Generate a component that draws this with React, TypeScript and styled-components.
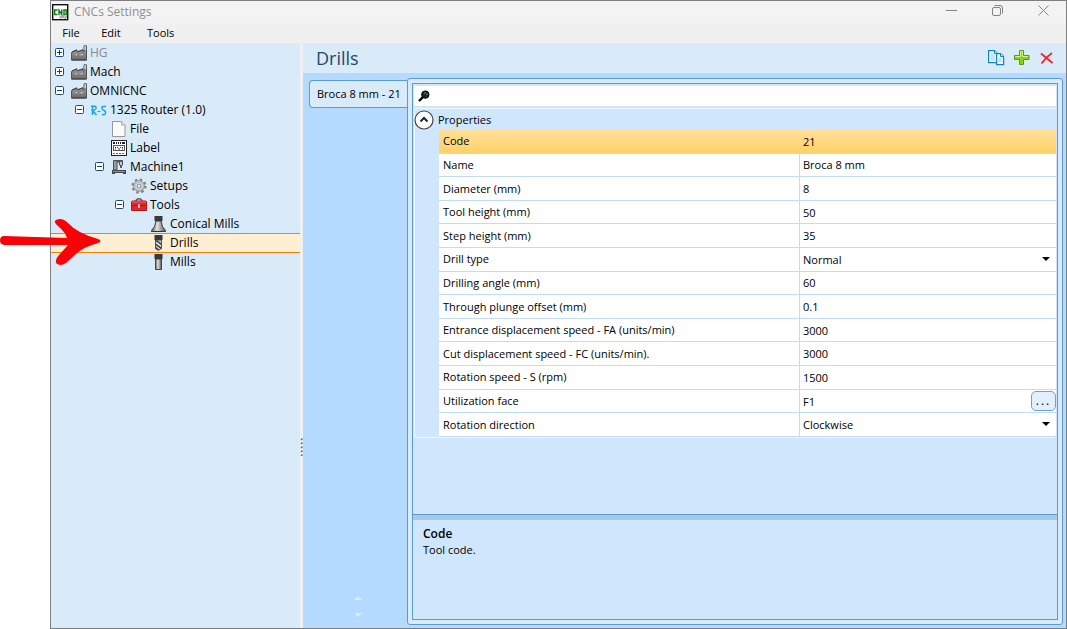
import React, { useState } from "react";
import styled, { createGlobalStyle, css } from "styled-components";

const line = "#5b9bd5";
const panel = "#d9eaf9";
const sheet = "#cfe6fd";
const rule = "#c3dcf5";

const GlobalStyle = createGlobalStyle`
  *, *::before, *::after { box-sizing: border-box; }
  body { margin: 0; background: #fff; }
  body, button, input, select { font-family: "Open Sans", "Noto Sans", sans-serif; }
  button, input, select { color: inherit; }
`;

const Page = styled.div`
  position: relative;
  display: flex;
  min-height: 100vh;
  padding-left: 50px;
  color: #000;
`;

const Window = styled.main`
  flex: 1;
  min-width: 0;
  display: flex;
  flex-direction: column;
  border: 1px solid #7e7e7e;
  background: #f0f0f0;
`;

const TitleBar = styled.header`
  display: flex;
  align-items: center;
  height: 22px;
  padding-left: 1px;
  background: #f3f3f3;
`;

const WindowTitle = styled.h1`
  flex: 1;
  margin: 0 0 0 5px;
  color: #8f8f8f;
  font-size: 12px;
  line-height: 16px;
  font-weight: 400;
`;

const PlainButton = styled.button`
  display: flex;
  align-items: center;
  justify-content: center;
  padding: 0;
  border: 0;
  background: none;
`;

const CaptionButton = styled(PlainButton)`
  align-self: flex-start;
  width: 46px;
  height: 19px;
`;

const MenuBar = styled.nav`
  display: flex;
  height: 20px;
  padding-left: 10px;
  gap: 20px;
`;

const MenuItem = styled(PlainButton)`
  min-width: 20px;
  font-size: 11px;
  line-height: 16px;

  &:last-child {
    margin-left: 6px;
  }
`;

const Body = styled.div`
  flex: 1;
  display: flex;
`;

const Sidebar = styled.aside`
  flex: 0 0 249px;
  background: ${panel};
`;

const List = styled.ul`
  margin: 0;
  padding: 0;
  list-style: none;
`;

const Row = styled.div<{ $level: number; $selected?: boolean; $muted?: boolean }>`
  display: flex;
  align-items: center;
  height: 19px;
  padding-left: ${(p) => 4 + p.$level * 20}px;
  font-size: 12px;
  line-height: 18px;
  white-space: nowrap;
  color: ${(p) => (p.$muted ? "#8c8c8c" : "#000")};
  ${(p) =>
    p.$selected &&
    css`
      background: #ffefd2;
      box-shadow: inset 0 1px #f5820a, 0 1px #f5820a;
    `}
`;

const Expander = styled.span`
  display: flex;
  width: 10px;
  margin-right: 6px;
`;

const NodeIcon = styled.span`
  display: flex;
  width: 16px;
  margin-right: 3px;
`;

const Splitter = styled.div`
  flex: 0 0 3px;
  display: flex;
  align-items: center;
  padding-top: 222px;
`;

const Editor = styled.section`
  flex: 1;
  min-width: 0;
  display: flex;
  flex-direction: column;
  background: #b4dbff;
`;

const EditorHeader = styled.div`
  display: flex;
  align-items: center;
  height: 30px;
  padding: 0 11px 0 13px;
  gap: 9px;
  background: ${panel};
`;

const Heading = styled.h2`
  flex: 1;
  margin: 0;
  color: #1d4a70;
  font-size: 18px;
  line-height: 24px;
  font-weight: 400;
`;

const Workspace = styled.div`
  flex: 1;
  display: flex;
  padding: 5px 3px 3px 6px;
`;

const TabStrip = styled.div`
  flex: 0 0 97px;
  display: flex;
  flex-direction: column;
  justify-content: space-between;
  padding: 2px 0 5px;
`;

const Tab = styled.button`
  z-index: 1;
  width: 98px;
  height: 28px;
  padding: 0 0 0 7px;
  border: 1px solid ${line};
  border-right: 0;
  border-radius: 4px 0 0 4px;
  background: ${panel};
  font-size: 11px;
  line-height: 16px;
  text-align: left;
  white-space: nowrap;
`;

const Scroller = styled.div`
  display: flex;
  flex-direction: column;
  align-items: center;
  gap: 4px;
`;

const Frame = styled.div`
  flex: 1;
  min-width: 0;
  display: flex;
  padding: 4px;
  border: 1px solid ${line};
  border-radius: 3px;
  background: ${panel};
`;

const Inspector = styled.div`
  flex: 1;
  min-width: 0;
  display: flex;
  flex-direction: column;
  border: 1px solid ${line};
  background: ${sheet};
`;

const SearchBar = styled.label`
  display: flex;
  align-items: center;
  height: 20px;
  margin: 2px 1px;
  padding-left: 4px;
  gap: 4px;
  background: #fff;
`;

const SearchInput = styled.input`
  flex: 1;
  min-width: 0;
  height: 18px;
  padding: 0;
  border: 0;
  outline: 0;
  background: none;
  font-size: 11px;
`;

const Group = styled.section`
  margin: 0 1px;
  padding-left: 24px;
  border: 1px solid #eff7ff;
  border-right: 0;
  border-radius: 3px;
`;

const GroupHeader = styled.h3`
  display: flex;
  align-items: center;
  gap: 4px;
  height: 21px;
  margin: 0 0 0 -25px;
  font-size: 11px;
  line-height: 16px;
  font-weight: 400;
`;

const Properties = styled.table`
  width: 100%;
  height: 307px;
  border-collapse: separate;
  border-spacing: 0;
  table-layout: fixed;
  font-size: 11px;
  line-height: 16px;
  background: #fff;
`;

const Property = styled.tr<{ $active: boolean }>`
  background: ${(p) => (p.$active ? "linear-gradient(#ffe09a, #ffd065)" : "#fff")};

  & > * {
    padding: 0 0 0 4px;
    border-bottom: 1px solid ${rule};
  }
  & > td {
    padding-left: 3px;
    border-left: 1px solid ${(p) => (p.$active ? "transparent" : rule)};
  }
`;

const PropertyName = styled.th`
  width: 360px;
  font-weight: 400;
  text-align: left;
  white-space: nowrap;
`;

const ValueCell = styled.div`
  display: flex;
  align-items: center;
  height: 20px;
`;

const ValueInput = styled.input`
  flex: 1;
  min-width: 0;
  height: 18px;
  padding: 0;
  border: 0;
  outline: 0;
  background: none;
  font-size: 11px;
`;

const ValueSelect = styled.select`
  flex: 1;
  min-width: 0;
  height: 18px;
  margin-right: -16px;
  padding: 0;
  border: 0;
  outline: 0;
  appearance: none;
  background: none;
  font-size: 11px;
`;

const DropArrow = styled.svg`
  margin-right: 6px;
  pointer-events: none;
`;

const MoreButton = styled.button`
  width: 25px;
  height: 20px;
  padding: 0;
  border: 1px solid #6f9fd0;
  border-radius: 5px;
  background: #e3effc;
  font-size: 12px;
  line-height: 16px;
  letter-spacing: 2px;
`;

const Description = styled.div`
  height: 105px;
  margin-top: auto;
  padding: 6px 10px;
  border-top: 1px solid ${line};
  box-shadow: inset 0 5px #a9c9e9;
  font-size: 11px;
  line-height: 16px;
`;

const DescriptionTitle = styled.h4`
  margin: 5px 0 0;
  font-size: 12px;
  font-weight: 600;
`;

const DescriptionText = styled.p`
  margin: 0;
`;

const Pointer = styled.svg`
  position: absolute;
  left: 0;
  top: 216px;
  pointer-events: none;
`;

const AppIcon = () => (
  <svg width="17" height="17" viewBox="0 0 17 17" aria-hidden="true">
    <rect x=".7" y=".7" width="15" height="15" fill="#fff" stroke="#111" strokeWidth="1.400" />
    <g fill="none" stroke="#0b7a12" strokeWidth="1.400">
      <path d="M5.500 6H2.700v4.500h2.800M7 11.200V6.300l2.800 4.200V5.300M12 6h2.200v4.500H12z" />
    </g>
    <circle cx="9" cy="13" r="1.300" fill="#c8c8c8" stroke="#888" strokeDasharray="1 .6" />
    <circle cx="12.800" cy="12.600" r="1.800" fill="#c8c8c8" stroke="#777" strokeDasharray="1 .6" />
  </svg>
);

const Factory = () => (
  <svg width="16" height="16" viewBox="0 0 16 16" aria-hidden="true">
    <defs>
      <linearGradient id="wall" x2="0" y2="1">
        <stop offset="0" stopColor="#b0b0b0" />
        <stop offset="1" stopColor="#6a6a6a" />
      </linearGradient>
    </defs>
    <path d="M.5 15V7.500L6 5v2L12 5v2h1V.800h2.500V15z" fill="url(#wall)" stroke="#555" />
    <path d="M13.200 2h2M13.200 4h2" stroke="#eee" />
    <path d="M1 6.800l5-2M7 6.600l5-2" stroke="#444" />
    <path d="M2 10.500l4.500-2v2l5.500-2v2H2z" fill="#f2f2f2" stroke="#777" strokeWidth=".6" />
    <path d="M.5 15h15" stroke="#3e3e3e" />
  </svg>
);

const RouterMark = () => (
  <svg width="16" height="16" viewBox="0 0 16 16" fill="none" stroke="#16a5dc" aria-hidden="true">
    <path d="M1.500 13V4M0 4.200h3.500Q5.500 4.500 5 6.500 4 8.500 1.500 8.500l4 4.500" strokeWidth="1.500" />
    <path d="M6.500 9.500h3" strokeWidth="1.200" />
    <path d="M15 4.500h-3q-1.500.5-1.200 2 .7 1.500 2.500 2 1.700.8 1.200 3-.7 1.500-3.500 1" strokeWidth="1.500" />
  </svg>
);

const FileSheet = () => (
  <svg width="16" height="16" viewBox="0 0 16 16" aria-hidden="true">
    <path d="M1.500.5h9l3.500 3.500v11.500H1.500z" fill="#fafafa" stroke="#999" />
    <path d="M10.500.5V4H14" fill="#e3e3e3" stroke="#aaa" />
  </svg>
);

const LabelSheet = () => (
  <svg width="16" height="16" viewBox="0 0 16 16" fill="none" aria-hidden="true">
    <rect x=".5" y=".5" width="15" height="15" fill="#fff" stroke="#222" />
    <path d="M2 3h2m1 0h1m1 0h1m1 0h1m1 0h3" stroke="#222" strokeWidth="2" />
    <rect x="2.500" y="5.500" width="11" height="5" stroke="#555" />
    <path d="M4 7.500h1m1 0h1m2 0h1m1 0h1M4 9h1m2 0h2m2 0h1" stroke="#333" />
    <path d="M2 13.500h12" stroke="#d33" strokeDasharray="2 1" />
  </svg>
);

const Machine = () => (
  <svg width="16" height="16" viewBox="0 0 16 16" aria-hidden="true">
    <path d="M2.500 11V1.500H6V11z" fill="#9a9ea2" stroke="#4c5054" />
    <path d="M4 1.500h7.500V6H8.500V3H6" fill="#5f6468" stroke="#4c5054" />
    <path d="M9 3h2v3H9z" fill="#c4c8cb" />
    <path d="M10 6v3" stroke="#333" strokeWidth="1.500" />
    <path d="M1 11h14v4h-3v-1H4v1H1z" fill="#45494d" />
    <path d="M2 12.500h12" stroke="#8b9095" />
  </svg>
);

const Gear = () => (
  <svg width="16" height="16" viewBox="0 0 16 16" aria-hidden="true">
    <circle cx="8" cy="8" r="6.300" fill="none" stroke="#858585" strokeWidth="2.600" strokeDasharray="2.470 2.470" />
    <circle cx="8" cy="8" r="4.500" fill="none" stroke="#8b8b8b" strokeWidth="2.500" />
    <circle cx="8" cy="8" r="4.100" fill="none" stroke="#c8c8c8" strokeWidth="1.800" />
    <circle cx="8" cy="8" r="2" fill="#e5eef5" stroke="#858585" />
  </svg>
);

const Toolbox = () => (
  <svg width="16" height="16" viewBox="0 0 16 16" aria-hidden="true">
    <path d="M4.500 5Q5 1.800 8 1.800T11.500 5" fill="none" stroke="#5a6670" strokeWidth="1.400" />
    <path d="M.5 5Q.5 4 1.500 4h13q1 0 1 1v8.500H.5z" fill="#e3262b" stroke="#b1191d" />
    <path d="M1 5h14" stroke="#f5655f" />
    <path d="M1 8.500h14" stroke="#a31518" />
    <rect x="7" y="7" width="2" height="4" fill="#f5f5f5" stroke="#844" strokeWidth=".5" />
  </svg>
);

const BitShades = () => (
  <defs>
    <linearGradient id="steel">
      <stop offset="0" stopColor="#555" />
      <stop offset=".4" stopColor="#e3e3e3" />
      <stop offset="1" stopColor="#505050" />
    </linearGradient>
  </defs>
);

const ConicalMill = () => (
  <svg width="16" height="16" viewBox="0 0 16 16" aria-hidden="true">
    <BitShades />
    <path d="M5 5h5q.5 6 4.500 9.500v1H.5v-1Q4.500 11 5 5z" fill="url(#steel)" stroke="#333" />
    <path d="M3.500 0h8v5h-8z" fill="#37393b" />
  </svg>
);

const DrillBit = () => (
  <svg width="16" height="16" viewBox="0 0 16 16" aria-hidden="true">
    <path d="M4.500 5h6v8.500l-3 2-3-2z" fill="#c4c4c4" stroke="#555" />
    <path d="M5 5.500l5.500 4M4.500 9l6 4.500M4.500 12.500l3 2.500" stroke="#333" strokeWidth="1.200" />
    <path d="M5 7.500l5 3.500" stroke="#f2f2f2" />
    <path d="M3.500 0h8v5h-8z" fill="#37393b" />
  </svg>
);

const MillBit = () => (
  <svg width="16" height="16" viewBox="0 0 16 16" aria-hidden="true">
    <BitShades />
    <path d="M4.500 5h6v10.500h-6z" fill="url(#steel)" stroke="#444" />
    <path d="M3.500 0h8v5h-8z" fill="#37393b" />
  </svg>
);

const ExpandBox = ({ open }: { open: boolean }) => (
  <svg width="9" height="9" viewBox="0 0 9 9" fill="none" aria-hidden="true">
    <rect x=".5" y=".5" width="8" height="8" rx="1" fill="#fff" stroke="#1d4a7d" />
    <path d={open ? "M2 4.500h5" : "M2 4.500h5M4.500 2v5"} stroke="#1d3f6e" />
  </svg>
);

const CopyPages = () => (
  <svg width="17" height="16" viewBox="0 0 17 16" fill="#eaf6fd" stroke="#1485b3" aria-hidden="true">
    <path d="M.6.600h6l3 3v9h-9z" strokeWidth="1.200" />
    <path d="M2.500 4h3M2.500 6h4.500M2.500 8h4.500M2.500 10h4.500" stroke="#9fd0e8" />
    <path d="M8.600 3.600h4l3 3v8h-7z" strokeWidth="1.200" />
    <path d="M12.500 3.500v3h3M6.500.500v3h3" />
    <path d="M10 9h4M10 11h4" stroke="#9fd0e8" />
  </svg>
);

const Plus = () => (
  <svg width="16" height="16" viewBox="0 0 16 16" aria-hidden="true">
    <path d="M5.500.5h4v5h5.500v4H9.500v5h-4v-5H.5v-4h5z" fill="#86d40c" stroke="#559c12" />
    <path d="M6.500 6.500v-5h2v5H14M1.500 7v-.5h5" fill="none" stroke="#d3f58c" />
  </svg>
);

const Cross = () => (
  <svg width="16" height="16" viewBox="0 0 16 16" fill="none" stroke="#f4272b" aria-hidden="true">
    <path d="M2 3.500L13.500 13" strokeWidth="2" />
    <path d="M2.500 13.500Q7 7 13 3" strokeWidth="1.800" />
  </svg>
);

const Magnifier = () => (
  <svg width="12" height="12" viewBox="0 0 12 12" aria-hidden="true">
    <path d="M1 11l4-4" stroke="#000" strokeWidth="2.400" />
    <circle cx="7.300" cy="4.600" r="3.700" fill="#152a35" stroke="#000" />
    <path d="M6 3.500l1.500-1M9 3.500v1.500" stroke="#79a3b5" />
  </svg>
);

const Collapse = () => (
  <svg width="20" height="20" viewBox="0 0 20 20" fill="none" aria-hidden="true">
    <circle cx="10" cy="10" r="9" fill="#fff" stroke="#444" strokeWidth="1.200" />
    <path d="M6.500 11.500L10 8l3.500 3.500" stroke="#222" strokeWidth="2" />
  </svg>
);

type TreeNode = {
  label: string;
  icon: () => React.JSX.Element;
  open?: boolean;
  muted?: boolean;
  selected?: boolean;
  children?: TreeNode[];
};

const tree: TreeNode[] = [
  { label: "HG", icon: Factory, open: false, muted: true },
  { label: "Mach", icon: Factory, open: false },
  {
    label: "OMNICNC",
    icon: Factory,
    open: true,
    children: [
      {
        label: "1325 Router (1.0)",
        icon: RouterMark,
        open: true,
        children: [
          { label: "File", icon: FileSheet },
          { label: "Label", icon: LabelSheet },
          {
            label: "Machine1",
            icon: Machine,
            open: true,
            children: [
              { label: "Setups", icon: Gear },
              {
                label: "Tools",
                icon: Toolbox,
                open: true,
                children: [
                  { label: "Conical Mills", icon: ConicalMill },
                  { label: "Drills", icon: DrillBit, selected: true },
                  { label: "Mills", icon: MillBit },
                ],
              },
            ],
          },
        ],
      },
    ],
  },
];

function TreeItem({ node, level }: { node: TreeNode; level: number }) {
  const [open, setOpen] = useState(node.open);
  const Icon = node.icon;
  return (
    <li role="treeitem" aria-expanded={open} aria-selected={!!node.selected}>
      <Row $level={level} $selected={node.selected} $muted={node.muted}>
        <Expander>
          {open !== undefined && (
            <PlainButton aria-label={`Toggle ${node.label}`} onClick={() => setOpen(!open)}>
              <ExpandBox open={open} />
            </PlainButton>
          )}
        </Expander>
        <NodeIcon>
          <Icon />
        </NodeIcon>
        {node.label}
      </Row>
      {open && node.children && (
        <List role="group">
          {node.children.map((child) => (
            <TreeItem key={child.label} node={child} level={level + 1} />
          ))}
        </List>
      )}
    </li>
  );
}

type PropertyRow = { name: string; value: string; options?: string[]; more?: boolean };

const rows: PropertyRow[] = [
  { name: "Code", value: "21" },
  { name: "Name", value: "Broca 8 mm" },
  { name: "Diameter (mm)", value: "8" },
  { name: "Tool height (mm)", value: "50" },
  { name: "Step height (mm)", value: "35" },
  { name: "Drill type", value: "Normal", options: ["Normal"] },
  { name: "Drilling angle (mm)", value: "60" },
  { name: "Through plunge offset (mm)", value: "0.1" },
  { name: "Entrance displacement speed - FA (units/min)", value: "3000" },
  { name: "Cut displacement speed - FC (units/min).", value: "3000" },
  { name: "Rotation speed - S (rpm)", value: "1500" },
  { name: "Utilization face", value: "F1", more: true },
  { name: "Rotation direction", value: "Clockwise", options: ["Clockwise"] },
];

export default function App() {
  return (
    <Page>
      <GlobalStyle />
      <Window>
        <TitleBar>
          <AppIcon />
          <WindowTitle>CNCs Settings</WindowTitle>
          <CaptionButton aria-label="Minimize">
            <svg width="11" height="11" stroke="#858585"><path d="M0 5.500h11" /></svg>
          </CaptionButton>
          <CaptionButton aria-label="Restore">
            <svg width="11" height="11" fill="none" stroke="#858585">
              <rect x=".5" y="2.500" width="8" height="8" rx="1.500" />
              <path d="M2.500.5H8Q10.500.5 10.500 3v5.500" />
            </svg>
          </CaptionButton>
          <CaptionButton aria-label="Close">
            <svg width="11" height="11" stroke="#858585"><path d="M.5.500l10 10M10.500.500l-10 10" /></svg>
          </CaptionButton>
        </TitleBar>
        <MenuBar>
          <MenuItem>File</MenuItem>
          <MenuItem>Edit</MenuItem>
          <MenuItem>Tools</MenuItem>
        </MenuBar>
        <Body>
          <Sidebar>
            <List role="tree" aria-label="Machines">
              {tree.map((node) => (
                <TreeItem key={node.label} node={node} level={0} />
              ))}
            </List>
          </Sidebar>
          <Splitter>
            <svg width="3" height="18" stroke="#1f6fb8" strokeWidth="1.200" aria-hidden="true">
              <path d="M1 2l1.500-1.500M1 6l1.500-1.500M1 10l1.500-1.500M1 14l1.500-1.500M1 18l1.500-1.500" />
            </svg>
          </Splitter>
          <Editor>
            <EditorHeader>
              <Heading>Drills</Heading>
              <PlainButton aria-label="Copy"><CopyPages /></PlainButton>
              <PlainButton aria-label="Add"><Plus /></PlainButton>
              <PlainButton aria-label="Delete"><Cross /></PlainButton>
            </EditorHeader>
            <Workspace>
              <TabStrip>
                <Tab>Broca 8 mm - 21</Tab>
                <Scroller>
                  <PlainButton aria-label="Scroll up">
                    <svg width="8" height="12" fill="#dcedfc"><path d="M0 8l4-4 4 4z" /></svg>
                  </PlainButton>
                  <PlainButton aria-label="Scroll down">
                    <svg width="8" height="12" fill="#dcedfc"><path d="M0 5h8l-4 4z" /></svg>
                  </PlainButton>
                </Scroller>
              </TabStrip>
              <Frame>
                <Inspector>
                  <SearchBar>
                    <Magnifier />
                    <SearchInput type="text" aria-label="Search properties" />
                  </SearchBar>
                  <Group>
                    <GroupHeader>
                      <PlainButton aria-label="Collapse properties"><Collapse /></PlainButton>
                      Properties
                    </GroupHeader>
                    <Properties>
                      <tbody>
                        {rows.map((row, i) => (
                          <Property key={row.name} $active={i === 0}>
                            <PropertyName scope="row">
                              <label htmlFor={`property-${i}`}>{row.name}</label>
                            </PropertyName>
                            <td>
                              <ValueCell>
                                {row.options ? (
                                  <>
                                    <ValueSelect id={`property-${i}`} defaultValue={row.value}>
                                      {row.options.map((o) => (
                                        <option key={o}>{o}</option>
                                      ))}
                                    </ValueSelect>
                                    <DropArrow width="8" height="5" aria-hidden="true">
                                      <path d="M0 0h8l-4 4z" />
                                    </DropArrow>
                                  </>
                                ) : (
                                  <ValueInput id={`property-${i}`} type="text" defaultValue={row.value} />
                                )}
                                {row.more && <MoreButton aria-label="Choose face">...</MoreButton>}
                              </ValueCell>
                            </td>
                          </Property>
                        ))}
                      </tbody>
                    </Properties>
                  </Group>
                  <Description>
                    <DescriptionTitle>Code</DescriptionTitle>
                    <DescriptionText>Tool code.</DescriptionText>
                  </Description>
                </Inspector>
              </Frame>
            </Workspace>
          </Editor>
        </Body>
      </Window>
      <Pointer width="102" height="52" fill="#fb0007" aria-hidden="true">
        <path d="M4 20L67 22Q66 17 58 10Q53 6 56 4Q62 1 68 7Q77 17 98 23Q103 25 98 27Q84 31 77 37L66 47Q60 51 56 47Q55 43 60 38L68 29L4 29Q0 28 0 24.500Q0 20 4 20z" />
      </Pointer>
    </Page>
  );
}
